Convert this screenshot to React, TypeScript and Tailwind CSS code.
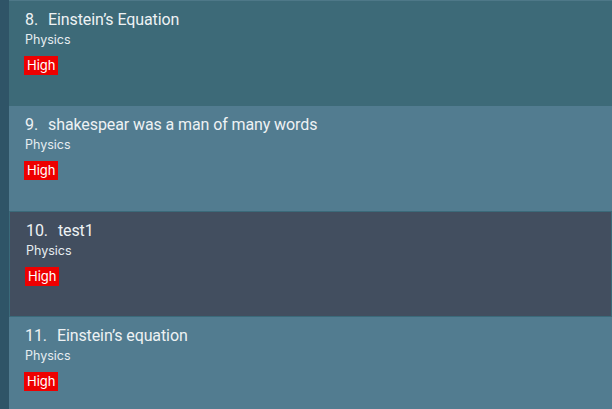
import React from "react";

type Item = { n: number; title: string; bg: string; extra: string };

const items: Item[] = [
  { n: 8, title: "Einstein\u2019s Equation", bg: "bg-[#3d6a78]", extra: "h-[106px] border-t border-[#4e7888]" },
  { n: 9, title: "shakespear was a man of many words", bg: "bg-[#527c90]", extra: "h-[105px]" },
  { n: 10, title: "test1", bg: "bg-[#424e5f]", extra: "h-[106px] border border-[#3b6a7a]" },
  { n: 11, title: "Einstein\u2019s equation", bg: "bg-[#527c90]", extra: "h-[106px]" },
];

function Row({ item }: { item: Item }) {
  return (
    <div className={`${item.bg} ${item.extra} shrink-0 pl-[16px] pt-[9px] flex flex-col items-start`}>
      <div className="flex text-[16px] leading-[20px] text-[#eef2f4] tracking-[-0.1px]">
        <span>{item.n}.</span>
        <span className="ml-[10px]">{item.title}</span>
      </div>
      <div className="text-[12.5px] leading-[17px] mt-[1px] text-[#e6edf0]" style={{ fontFamily: "Inter, sans-serif" }}>Physics</div>
      <div className="mt-[8px] -ml-[1px] bg-[#ee0000] text-white text-[13px] leading-[19px] px-[3px]" style={{ fontFamily: "Inter, sans-serif" }}>High</div>
    </div>
  );
}

export default function App() {
  return (
    <div className="w-[612px] h-[409px] overflow-hidden flex" style={{ fontFamily: "Roboto, 'Noto Sans', sans-serif" }}>
      <div className="w-[9px] shrink-0 bg-[#2f5467]" />
      <div className="flex-1 flex flex-col">
        {items.map((it) => (
          <Row key={it.n} item={it} />
        ))}
      </div>
    </div>
  );
}
